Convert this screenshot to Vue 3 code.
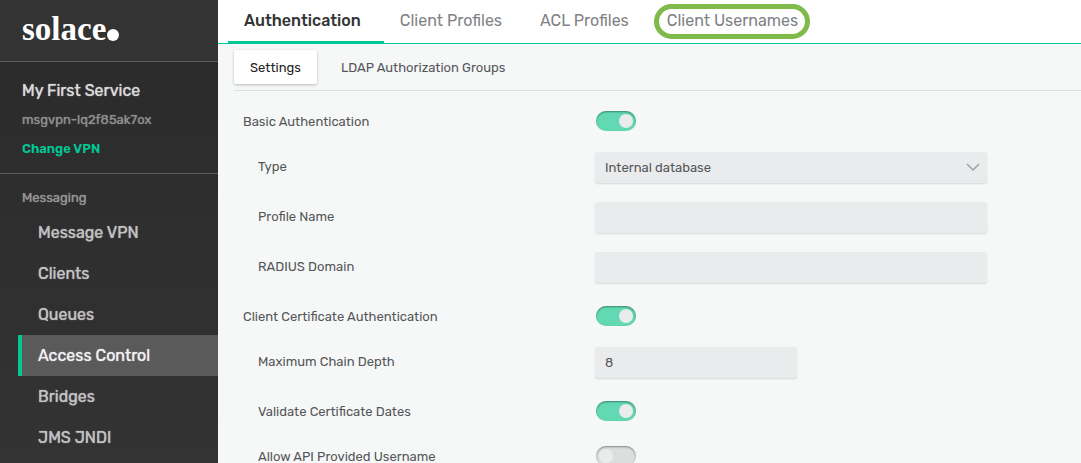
<script setup>
import { ref, reactive } from 'vue'

const navItems = ['Message VPN', 'Clients', 'Queues', 'Access Control', 'Bridges', 'JMS JNDI']
const activeNav = ref('Access Control')

const tabs = [
  { name: 'Authentication' },
  { name: 'Client Profiles' },
  { name: 'ACL Profiles' },
  { name: 'Client Usernames', ringed: true },
]
const activeTab = ref('Authentication')

const subTabs = ['Settings', 'LDAP Authorization Groups']
const activeSub = ref('Settings')

const rows = reactive([
  { id: 'basic', label: 'Basic Authentication', kind: 'toggle', value: true },
  { id: 'type', label: 'Type', kind: 'select', value: 'Internal database', sub: true },
  { id: 'profile', label: 'Profile Name', kind: 'text', value: '', sub: true },
  { id: 'radius', label: 'RADIUS Domain', kind: 'text', value: '', sub: true },
  { id: 'cert', label: 'Client Certificate Authentication', kind: 'toggle', value: true },
  { id: 'depth', label: 'Maximum Chain Depth', kind: 'text', value: '8', sub: true, short: true },
  { id: 'dates', label: 'Validate Certificate Dates', kind: 'toggle', value: true, sub: true },
  { id: 'api', label: 'Allow API Provided Username', kind: 'toggle', value: false, sub: true },
])
</script>

<template>
  <div class="app">
    <aside class="sidebar">
      <div class="brand">
        <a href="#" class="logo">solace<svg class="dot" viewBox="0 0 12 12" aria-hidden="true"><circle cx="6" cy="6" r="6" /></svg></a>
      </div>
      <section class="service">
        <h2>My First Service</h2>
        <p>msgvpn-lq2f85ak7ox</p>
        <a href="#">Change VPN</a>
      </section>
      <nav class="menu">
        <h3>Messaging</h3>
        <a
          v-for="item in navItems"
          :key="item"
          href="#"
          :class="{ active: item === activeNav }"
          @click.prevent="activeNav = item"
        >{{ item }}</a>
      </nav>
    </aside>

    <main class="main">
      <nav class="tabs">
        <a
          v-for="tab in tabs"
          :key="tab.name"
          href="#"
          :class="{ active: tab.name === activeTab }"
          @click.prevent="activeTab = tab.name"
        ><span :class="{ ringed: tab.ringed }">{{ tab.name }}</span></a>
      </nav>

      <div class="subtabs">
        <button
          v-for="sub in subTabs"
          :key="sub"
          type="button"
          :class="{ active: sub === activeSub }"
          @click="activeSub = sub"
        >{{ sub }}</button>
      </div>

      <form class="form" @submit.prevent>
        <div v-for="row in rows" :key="row.id" class="row" :class="{ sub: row.sub }">
          <label :for="row.id">{{ row.label }}</label>
          <div v-if="row.kind === 'toggle'" class="switch">
            <input :id="row.id" v-model="row.value" type="checkbox" role="switch" />
          </div>
          <div v-else-if="row.kind === 'select'" class="field">
            <select :id="row.id" v-model="row.value">
              <option>Internal database</option>
              <option>LDAP</option>
              <option>RADIUS</option>
            </select>
            <svg class="chevron" viewBox="0 0 14 8" aria-hidden="true"><path d="M1 1 L7 7 L13 1" /></svg>
          </div>
          <div v-else class="field" :class="{ short: row.short }">
            <input :id="row.id" v-model="row.value" type="text" />
          </div>
        </div>
      </form>
    </main>
  </div>
</template>

<style>
body {
  margin: 0;
}
</style>

<style scoped>
* {
  box-sizing: border-box;
}
.app {
  display: flex;
  height: 100vh;
  overflow: hidden;
  font-family: Rubik, Roboto, "Liberation Sans", sans-serif;
  font-size: 13px;
  color: #55565a;
  background: #f6f8f7;
}
a {
  text-decoration: none;
}

/* Sidebar */
.sidebar {
  flex: 0 0 218px;
  overflow: hidden;
  background: linear-gradient(#2a2a2a, #333333);
}
.brand {
  height: 62px;
  padding: 9px 22px 0;
  background: #333333;
  border-bottom: 1px solid #5d5d5d;
}
.logo {
  display: flex;
  align-items: center;
  font: bold 33px/40px "Liberation Serif", serif;
  color: #ffffff;
}
.dot {
  width: 12px;
  height: 12px;
  margin: 12px 0 0 1px;
  fill: #ffffff;
}
.service {
  height: 112px;
  padding: 17px 22px 0;
  border-bottom: 1px solid #5d5d5d;
}
.service h2 {
  margin: 0;
  font-size: 16px;
  font-weight: 400;
  line-height: 24px;
  color: #dadada;
  text-shadow: 0 0 1px currentColor;
}
.service p {
  margin: 5px 0;
  font-weight: 400;
  line-height: 24px;
  color: #8e8e8e;
  text-shadow: 0 0 1px currentColor;
}
.service a {
  display: block;
  font-weight: 600;
  line-height: 24px;
  color: #00c895;
}
.menu h3 {
  margin: 0;
  padding: 14px 22px 0;
  font-size: 13px;
  font-weight: 400;
  line-height: 20px;
  color: #959595;
  text-shadow: 0 0 1px currentColor;
}
.menu h3 + a {
  margin-top: 4px;
}
.menu a {
  display: block;
  margin-left: 18px;
  padding-left: 16px;
  border-left: 4px solid transparent;
  font-size: 16px;
  font-weight: 400;
  line-height: 41px;
  color: #c2c2c2;
  text-shadow: 0 0 1px currentColor;
}
.menu a.active {
  border-left-color: #00c895;
  background: #5a5a5a;
  color: #f0f0f0;
}

/* Tabs */
.main {
  flex: 1;
  min-width: 0;
  overflow: auto;
  scrollbar-width: none;
}
.tabs {
  display: flex;
  height: 44px;
  padding-left: 10px;
  background: #ffffff;
  border-bottom: 1px solid #00c895;
}
.tabs a {
  height: 44px;
  padding: 0 22px 0 16px;
  border-bottom: 3px solid transparent;
  font-size: 16px;
  line-height: 41px;
  white-space: nowrap;
  color: #818285;
}
.tabs a.active {
  padding-right: 23px;
  border-bottom-color: #00c895;
  font-weight: 500;
  color: #333436;
}
.ringed {
  position: relative;
}
.ringed::after {
  content: "";
  position: absolute;
  inset: -7px -12px -9px -13px;
  border: 5px solid #7fba4a;
  border-radius: 18px;
}
.subtabs {
  display: flex;
  gap: 8px;
  margin-left: 16px;
  padding: 6px 0;
  border-bottom: 1px solid #dcdfdf;
}
.subtabs button {
  height: 34px;
  padding: 0 16px;
  border: 0;
  border-radius: 2px;
  background: none;
  font: inherit;
  color: #55565a;
}
.subtabs button.active {
  background: #ffffff;
  box-shadow: 0 1px 3px rgba(0, 0, 0, 0.25);
  color: #222325;
}

/* Form */
.form {
  padding: 16px 94px 16px 25px;
}
.row {
  display: flex;
  align-items: flex-start;
  line-height: 30px;
}
.row label {
  flex: 0 0 352px;
}
.row.sub label {
  padding-left: 15px;
}
.switch {
  display: flex;
  align-items: center;
  height: 28px;
  margin: 0 0 17px 1px;
}
.switch input {
  appearance: none;
  display: flex;
  align-items: center;
  width: 40px;
  height: 20px;
  margin: 0;
  padding: 0 3px;
  border-radius: 10px;
  background: #dcdedd;
  box-shadow: inset 0 1px 2px rgba(0, 0, 0, 0.4);
}
.switch input::before {
  content: "";
  width: 14px;
  height: 14px;
  border-radius: 50%;
  background: #eaebed;
}
.switch input:checked {
  justify-content: flex-end;
  background: #62d9b3;
}
.field {
  position: relative;
  flex: 1;
  height: 30px;
  margin-bottom: 20px;
}
.field.short {
  max-width: 202px;
}
.field input,
.field select {
  appearance: none;
  display: block;
  width: 100%;
  height: 31px;
  padding: 0 10px;
  border: 0;
  border-radius: 3px;
  background: #eaebed;
  box-shadow: 0 1px 2px rgba(0, 0, 0, 0.13);
  font: inherit;
  color: #55565a;
}
.chevron {
  position: absolute;
  top: 11px;
  right: 7px;
  width: 14px;
  height: 8px;
  fill: none;
  stroke: #a0a2a5;
  stroke-width: 1.5;
  pointer-events: none;
}
</style>
